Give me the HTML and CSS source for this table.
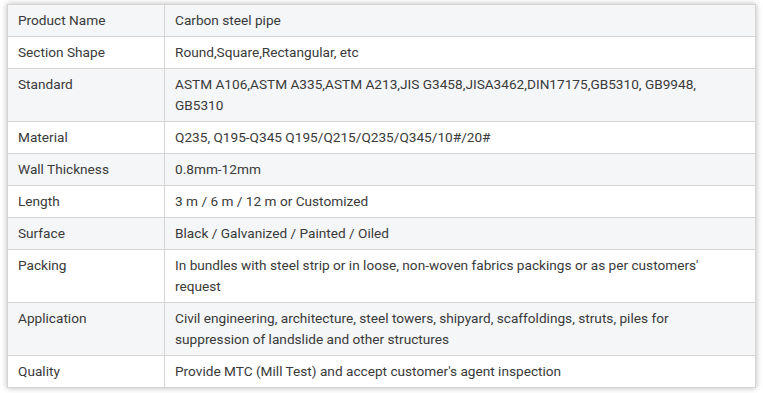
FILE: index.html
```html
<!DOCTYPE html>
<html>
<head>
<meta charset="utf-8">
<link rel="stylesheet" href="styles.css">
</head>
<body>
<div class="wrap">
<table class="spec">
<tbody>
<tr><td class="k">Product Name</td><td class="v">Carbon steel pipe</td></tr>
<tr><td class="k">Section Shape</td><td class="v">Round,Square,Rectangular, etc</td></tr>
<tr><td class="k">Standard</td><td class="v">ASTM A106,ASTM A335,ASTM A213,JIS G3458,JISA3462,DIN17175,GB5310, GB9948, GB5310</td></tr>
<tr><td class="k">Material</td><td class="v">Q235, Q195-Q345 Q195/Q215/Q235/Q345/10#/20#</td></tr>
<tr><td class="k">Wall Thickness</td><td class="v">0.8mm-12mm</td></tr>
<tr><td class="k">Length</td><td class="v">3 m / 6 m / 12 m or Customized</td></tr>
<tr><td class="k">Surface</td><td class="v">Black / Galvanized / Painted / Oiled</td></tr>
<tr><td class="k">Packing</td><td class="v">In bundles with steel strip or in loose, non-woven fabrics packings or as per customers' request</td></tr>
<tr><td class="k">Application</td><td class="v">Civil engineering, architecture, steel towers, shipyard, scaffoldings, struts, piles for suppression of landslide and other structures</td></tr>
<tr><td class="k">Quality</td><td class="v">Provide MTC (Mill Test) and accept customer's agent inspection</td></tr>
</tbody>
</table>
</div>
</body>
</html>
```
FILE: styles.css
```css
html, body {
  margin: 0;
  padding: 0;
  background: #ffffff;
}
body {
  font-family: Roboto, "Liberation Sans", Arial, sans-serif;
  font-size: 13.65px;
  color: #3a3a3a;
}
.wrap {
  padding: 4px 7px 6px 7px;
}
.spec {
  width: 749px;
  border-collapse: collapse;
  box-shadow: 0 0 6px rgba(0, 0, 0, 0.28);
}
.spec td {
  border: 1px solid #d4d4d4;
  padding: 5px 10px;
  line-height: 21px;
  vertical-align: top;
  text-align: left;
}
.spec tr:nth-child(odd) td {
  background: #f5f6f8;
}
.spec tr:nth-child(even) td {
  background: #ffffff;
}
.spec .k {
  width: 136px;
}
```
